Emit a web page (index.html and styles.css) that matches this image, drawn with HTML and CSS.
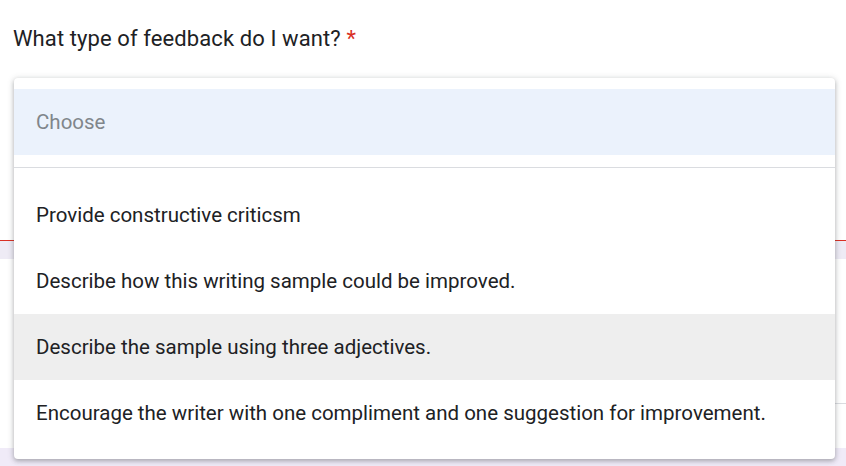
FILE: index.html
```html
<!DOCTYPE html>
<html>
<head>
<meta charset="utf-8">
<link rel="stylesheet" href="styles.css">
</head>
<body>
<div class="page">
  <div class="question">
    <div class="title">What type of feedback do I want? <span class="req">*</span></div>
  </div>
  <div class="band"></div>
  <div class="section">
    <div class="rule"></div>
  </div>
  <div class="footer"></div>

  <div class="menu">
    <div class="choose">Choose</div>
    <div class="divider"></div>
    <div class="options">
      <div class="option">Provide constructive criticsm</div>
      <div class="option">Describe how this writing sample could be improved.</div>
      <div class="option hover">Describe the sample using three adjectives.</div>
      <div class="option">Encourage the writer with one compliment and one suggestion for improvement.</div>
    </div>
  </div>
</div>
</body>
</html>
```

FILE: styles.css
```css
* { box-sizing: border-box; }
html, body { margin: 0; padding: 0; }
body {
  font-family: Roboto, "Liberation Sans", sans-serif;
  color: #202124;
  background: #ffffff;
  width: 846px;
  height: 466px;
  overflow: hidden;
}
.page { position: relative; width: 846px; height: 466px; }
.question {
  height: 241px;
  padding: 26px 13px 0;
  border-bottom: 1px solid #d93025;
}
.title { font-size: 22px; line-height: 26px; letter-spacing: 0.1px; }
.req { color: #d93025; }
.band { height: 18px; background: #eeebf5; }
.section { height: 189px; display: flex; flex-direction: column; justify-content: flex-start; padding-top: 144px; }
.rule { height: 1px; margin-left: 20px; background: #dadce0; }
.footer { height: 18px; background: #f0ebf8; }

.menu {
  position: absolute;
  left: 14px;
  top: 78px;
  width: 821px;
  height: 381px;
  background: #ffffff;
  border-radius: 4px;
  box-shadow: 0 2px 4px rgba(60,64,67,0.3), 0 1px 6px 1px rgba(60,64,67,0.15);
  padding: 11px 0 13px;
  display: flex;
  flex-direction: column;
  font-size: 20.5px;
}
.choose {
  height: 66px;
  background: #ebf2fc;
  color: #80868b;
  display: flex;
  align-items: center;
  padding-left: 22px;
}
.divider { height: 1px; background: #dadce0; margin: 12px 0 14px; }
.options { display: flex; flex-direction: column; }
.option {
  height: 66px;
  display: flex;
  align-items: center;
  padding-left: 22px;
  color: #202124;
}
.option.hover { background: #eeeeee; }
```
